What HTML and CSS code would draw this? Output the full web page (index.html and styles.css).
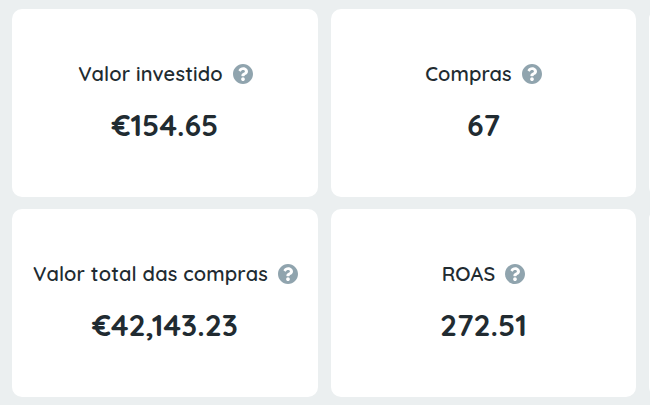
FILE: index.html
```
<!DOCTYPE html>
<html lang="pt">
<head>
    <meta charset="UTF-8">
    <meta name="viewport" content="width=device-width, initial-scale=1.0">
    <title>Resumo</title>
    <link rel="stylesheet" href="styles.css">
</head>
<body>
    <svg class="sprite">
        <symbol id="help" viewBox="8 8 496 496">
            <path d="M504 256c0 136.997-111.043 248-248 248S8 392.997 8 256C8 119.083 119.043 8 256 8s248 111.083 248 248zM262.655 90c-54.497 0-89.255 22.957-116.549 63.758-3.536 5.286-2.353 12.415 2.715 16.258l34.699 26.31c5.205 3.947 12.621 3.008 16.665-2.122 17.864-22.658 30.113-35.797 57.303-35.797 20.429 0 45.698 13.148 45.698 32.958 0 14.976-12.363 22.667-32.534 33.976C247.128 238.528 216 254.941 216 296v4c0 6.627 5.373 12 12 12h56c6.627 0 12-5.373 12-12v-1.333c0-28.462 83.186-29.647 83.186-106.667 0-58.002-60.165-102-116.531-102zM256 338c-25.365 0-46 20.635-46 46 0 25.364 20.635 46 46 46s46-20.636 46-46c0-25.365-20.635-46-46-46z"/>
        </symbol>
    </svg>

    <div class="cards">
        <div class="card">
            <div class="label"><span>Valor investido</span><svg class="help"><use href="#help"/></svg></div>
            <div class="value">€154.65</div>
        </div>
        <div class="card">
            <div class="label short"><span>Compras</span><svg class="help"><use href="#help"/></svg></div>
            <div class="value">67</div>
        </div>
        <div class="card"></div>
        <div class="card">
            <div class="label"><span>Valor total das compras</span><svg class="help"><use href="#help"/></svg></div>
            <div class="value">€42,143.23</div>
        </div>
        <div class="card">
            <div class="label short"><span>ROAS</span><svg class="help"><use href="#help"/></svg></div>
            <div class="value">272.51</div>
        </div>
        <div class="card"></div>
    </div>
</body>
</html>
```
FILE: styles.css
```
body { font-family: Quicksand, Lato, sans-serif; margin: 0; background-color: #ebeff0; color: #212b31; }
.sprite { display: none; }
.cards { display: grid; grid-template-columns: 306px 305px 306px; grid-auto-rows: 188px; gap: 12px 13px; box-sizing: border-box; height: 405px; padding: 9px 0 0 12px; overflow: hidden; }
.card { background-color: #fff; border-radius: 10px; text-align: center; box-sizing: border-box; padding-top: 52px; }
.label { display: flex; align-items: center; justify-content: center; gap: 10px; height: 26px; padding-left: 1px; font-size: 20px; font-weight: 600; line-height: 26px; letter-spacing: 0.16px; white-space: nowrap; }
.short { padding-left: 0; letter-spacing: 0.08px; }
.help { width: 20px; height: 20px; fill: #90a4ae; flex: none; }
.value { margin-top: 19px; font-size: 30px; font-weight: 700; line-height: 38px; }
```
